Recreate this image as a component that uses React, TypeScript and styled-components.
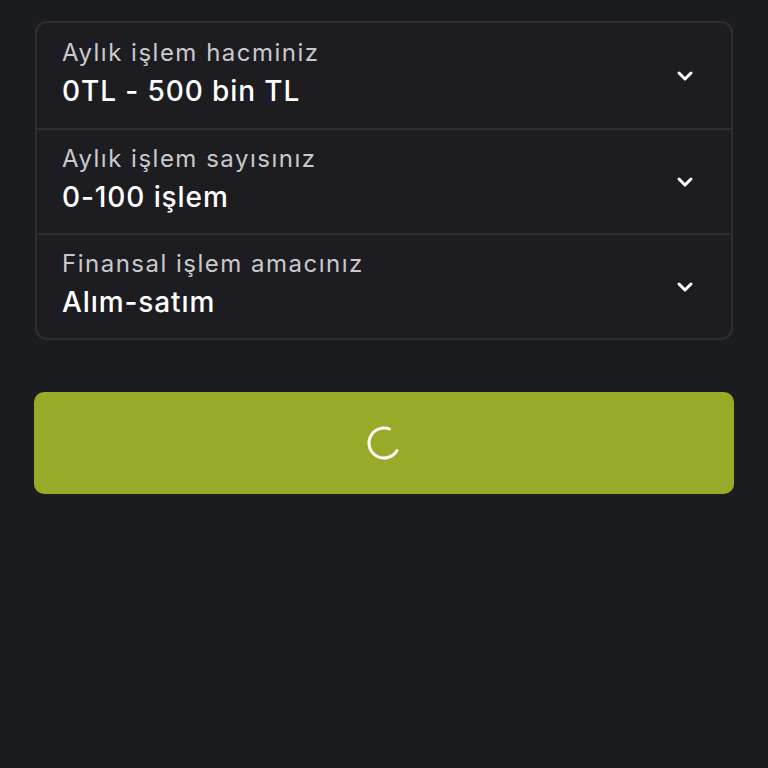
import React from 'react';
import styled, { createGlobalStyle } from 'styled-components';

const GlobalStyle = createGlobalStyle`
  html, body {
    margin: 0;
    padding: 0;
    background: #1b1c20;
    font-family: Inter, "Noto Sans", sans-serif;
  }
`;

const options = [
  { label: 'Aylık işlem hacminiz', value: '0TL - 500 bin TL' },
  { label: 'Aylık işlem sayısınız', value: '0-100 işlem' },
  { label: 'Finansal işlem amacınız', value: 'Alım-satım' },
];

const Chevron = () => (
  <svg width="24" height="24" viewBox="0 0 24 24" fill="none" stroke="#fff" strokeWidth="3" strokeLinecap="round" strokeLinejoin="round">
    <polyline points="6 9 12 15 18 9" />
  </svg>
);

const Spinner = () => (
  <svg width="38" height="38" viewBox="0 0 38 38" fill="none">
    <circle
      cx="19"
      cy="19"
      r="15"
      stroke="#fff"
      strokeWidth="3"
      strokeLinecap="round"
      strokeDasharray="68 26.2"
      transform="rotate(30 19 19)"
    />
  </svg>
);

export default function App() {
  return (
    <>
      <GlobalStyle />
      <Page>
        <Card>
          {options.map((o) => (
            <Row key={o.label}>
              <Texts>
                <Label>{o.label}</Label>
                <Value>{o.value}</Value>
              </Texts>
              <Chevron />
            </Row>
          ))}
        </Card>
        <SubmitButton>
          <Spinner />
        </SubmitButton>
      </Page>
    </>
  );
}

const Page = styled.div`
  display: flex;
  flex-direction: column;
  gap: 52px;
  padding: 21px 34px 0;
  min-height: 768px;
  box-sizing: border-box;
`;

const Card = styled.div`
  display: flex;
  flex-direction: column;
  margin: 0 1px;
  border: 2px solid #2d2e33;
  border-radius: 12px;
  background: #1c1c21;
`;

const Row = styled.div`
  display: flex;
  align-items: center;
  justify-content: space-between;
  height: 105px;
  padding: 0 34px 0 25px;
  box-sizing: border-box;
  & + & {
    border-top: 2px solid #2d2e33;
  }
`;

const Texts = styled.div`
  display: flex;
  flex-direction: column;
  gap: 8px;
  margin-top: -6px;
`;

const Label = styled.span`
  font-size: 24px;
  line-height: 28px;
  color: #c9c9cd;
  letter-spacing: 1.5px;
`;

const Value = styled.span`
  font-size: 28px;
  line-height: 32px;
  font-weight: 500;
  color: #ffffff;
  letter-spacing: 0.9px;
`;

const SubmitButton = styled.div`
  display: flex;
  align-items: center;
  justify-content: center;
  height: 102px;
  border-radius: 10px;
  background: #99aa28;
`;
